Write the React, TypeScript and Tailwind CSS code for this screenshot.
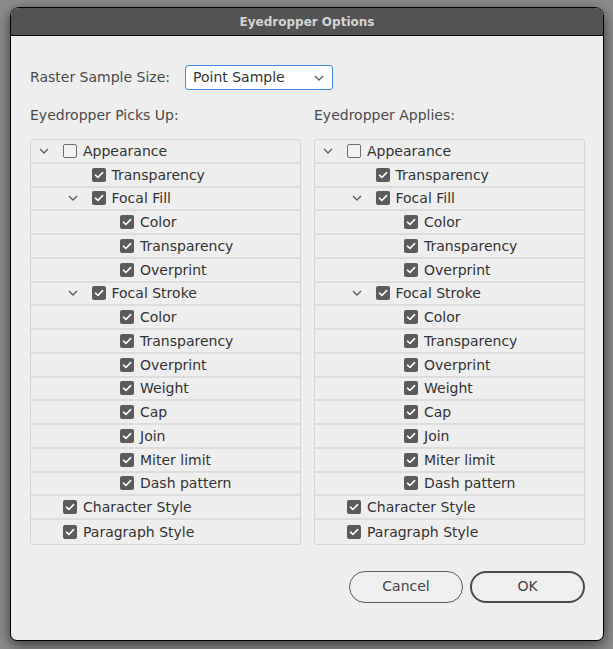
import React from 'react';

type Row = { label: string; level: 0 | 1 | 2; chevron?: boolean; checked: boolean };

const rows: Row[] = [
  { label: 'Appearance', level: 0, chevron: true, checked: false },
  { label: 'Transparency', level: 1, checked: true },
  { label: 'Focal Fill', level: 1, chevron: true, checked: true },
  { label: 'Color', level: 2, checked: true },
  { label: 'Transparency', level: 2, checked: true },
  { label: 'Overprint', level: 2, checked: true },
  { label: 'Focal Stroke', level: 1, chevron: true, checked: true },
  { label: 'Color', level: 2, checked: true },
  { label: 'Transparency', level: 2, checked: true },
  { label: 'Overprint', level: 2, checked: true },
  { label: 'Weight', level: 2, checked: true },
  { label: 'Cap', level: 2, checked: true },
  { label: 'Join', level: 2, checked: true },
  { label: 'Miter limit', level: 2, checked: true },
  { label: 'Dash pattern', level: 2, checked: true },
  { label: 'Character Style', level: 0, checked: true },
  { label: 'Paragraph Style', level: 0, checked: true },
];

const indent = ['pl-[3px]', 'pl-[31.5px]', 'pl-[60px]'];

function Chevron() {
  return (
    <svg width="10" height="6" viewBox="0 0 10 6" fill="none">
      <path d="M1 1l4 4 4-4" stroke="#5a5a5a" strokeWidth="1.3" />
    </svg>
  );
}

function Checkbox({ checked }: { checked: boolean }) {
  if (!checked) {
    return <div className="w-[14px] h-[14px] rounded-[2px] border border-[#6e6e6e] bg-[#f3f3f3] flex-shrink-0" />;
  }
  return (
    <div className="w-[14px] h-[14px] rounded-[2px] bg-[#5b5b5b] flex items-center justify-center flex-shrink-0">
      <svg width="10" height="8" viewBox="0 0 10 8" fill="none">
        <path d="M1.5 4.2l2.4 2.3L8.6 1.6" stroke="#ffffff" strokeWidth="1.6" strokeLinecap="round" strokeLinejoin="round" />
      </svg>
    </div>
  );
}

function Tree({ title }: { title: string }) {
  return (
    <div className="flex flex-col w-[271px]">
      <div className="text-[14px] text-[#4a4a4a] h-[20px] leading-[20px] mt-[2px]">{title}</div>
      <div className="mt-[14px] border border-[#d6d6d6] rounded-[2px]">
        {rows.map((r, i) => (
          <div
            key={i}
            className={`h-[23.75px] flex items-center ${indent[r.level]} ${i < rows.length - 1 ? 'border-b-2 border-[#dcdcdc]' : ''}`}
          >
            <div className="w-[29px] flex items-center pl-[5px]">{r.chevron && <Chevron />}</div>
            <Checkbox checked={r.checked} />
            <span className="ml-[6px] text-[14px] text-[#333333] leading-none">{r.label}</span>
          </div>
        ))}
      </div>
    </div>
  );
}

export default function App() {
  return (
    <div
      className="w-[613px] h-[649px] bg-[#8c8c8c] pt-[7px] pl-[10px] overflow-hidden"
      style={{ fontFamily: '"DejaVu Sans", sans-serif' }}
    >
      <div className="w-[594px] h-[634px] rounded-t-[9px] rounded-b-[7px] border border-black overflow-hidden flex flex-col bg-[#eeeeee] shadow-[0_4px_14px_rgba(0,0,0,0.6)]">
        {/* Title bar */}
        <div className="h-[28px] bg-[#535353] border-b border-black flex items-center justify-center flex-shrink-0">
          <span className="text-[12px] font-bold text-[#d4d4d4]">Eyedropper Options</span>
        </div>

        <div className="flex-1 pl-[19px] pr-[18px]">
          {/* Raster sample size */}
          <div className="flex items-center mt-[29px]">
            <span className="text-[14px] text-[#4a4a4a] w-[155px]">Raster Sample Size:</span>
            <div className="w-[148px] h-[25px] bg-white border-[1.5px] border-[#3d8ae8] rounded-[3px] flex items-center justify-between pl-[7px] pr-[8px]">
              <span className="text-[14px] text-[#333333]">Point Sample</span>
              <Chevron />
            </div>
          </div>

          {/* Trees */}
          <div className="flex gap-[13px] mt-[13px]">
            <Tree title="Eyedropper Picks Up:" />
            <Tree title="Eyedropper Applies:" />
          </div>

          {/* Buttons */}
          <div className="flex justify-end gap-[7px] mt-[26px]">
            <button className="w-[114px] h-[32px] rounded-full border border-[#5a5a5a] text-[14px] text-[#444444] bg-[#efefef]">
              Cancel
            </button>
            <button className="w-[115px] h-[32px] rounded-full border-2 border-[#4a4a4a] text-[14px] text-[#444444] bg-[#efefef]">
              OK
            </button>
          </div>
        </div>
      </div>
    </div>
  );
}
